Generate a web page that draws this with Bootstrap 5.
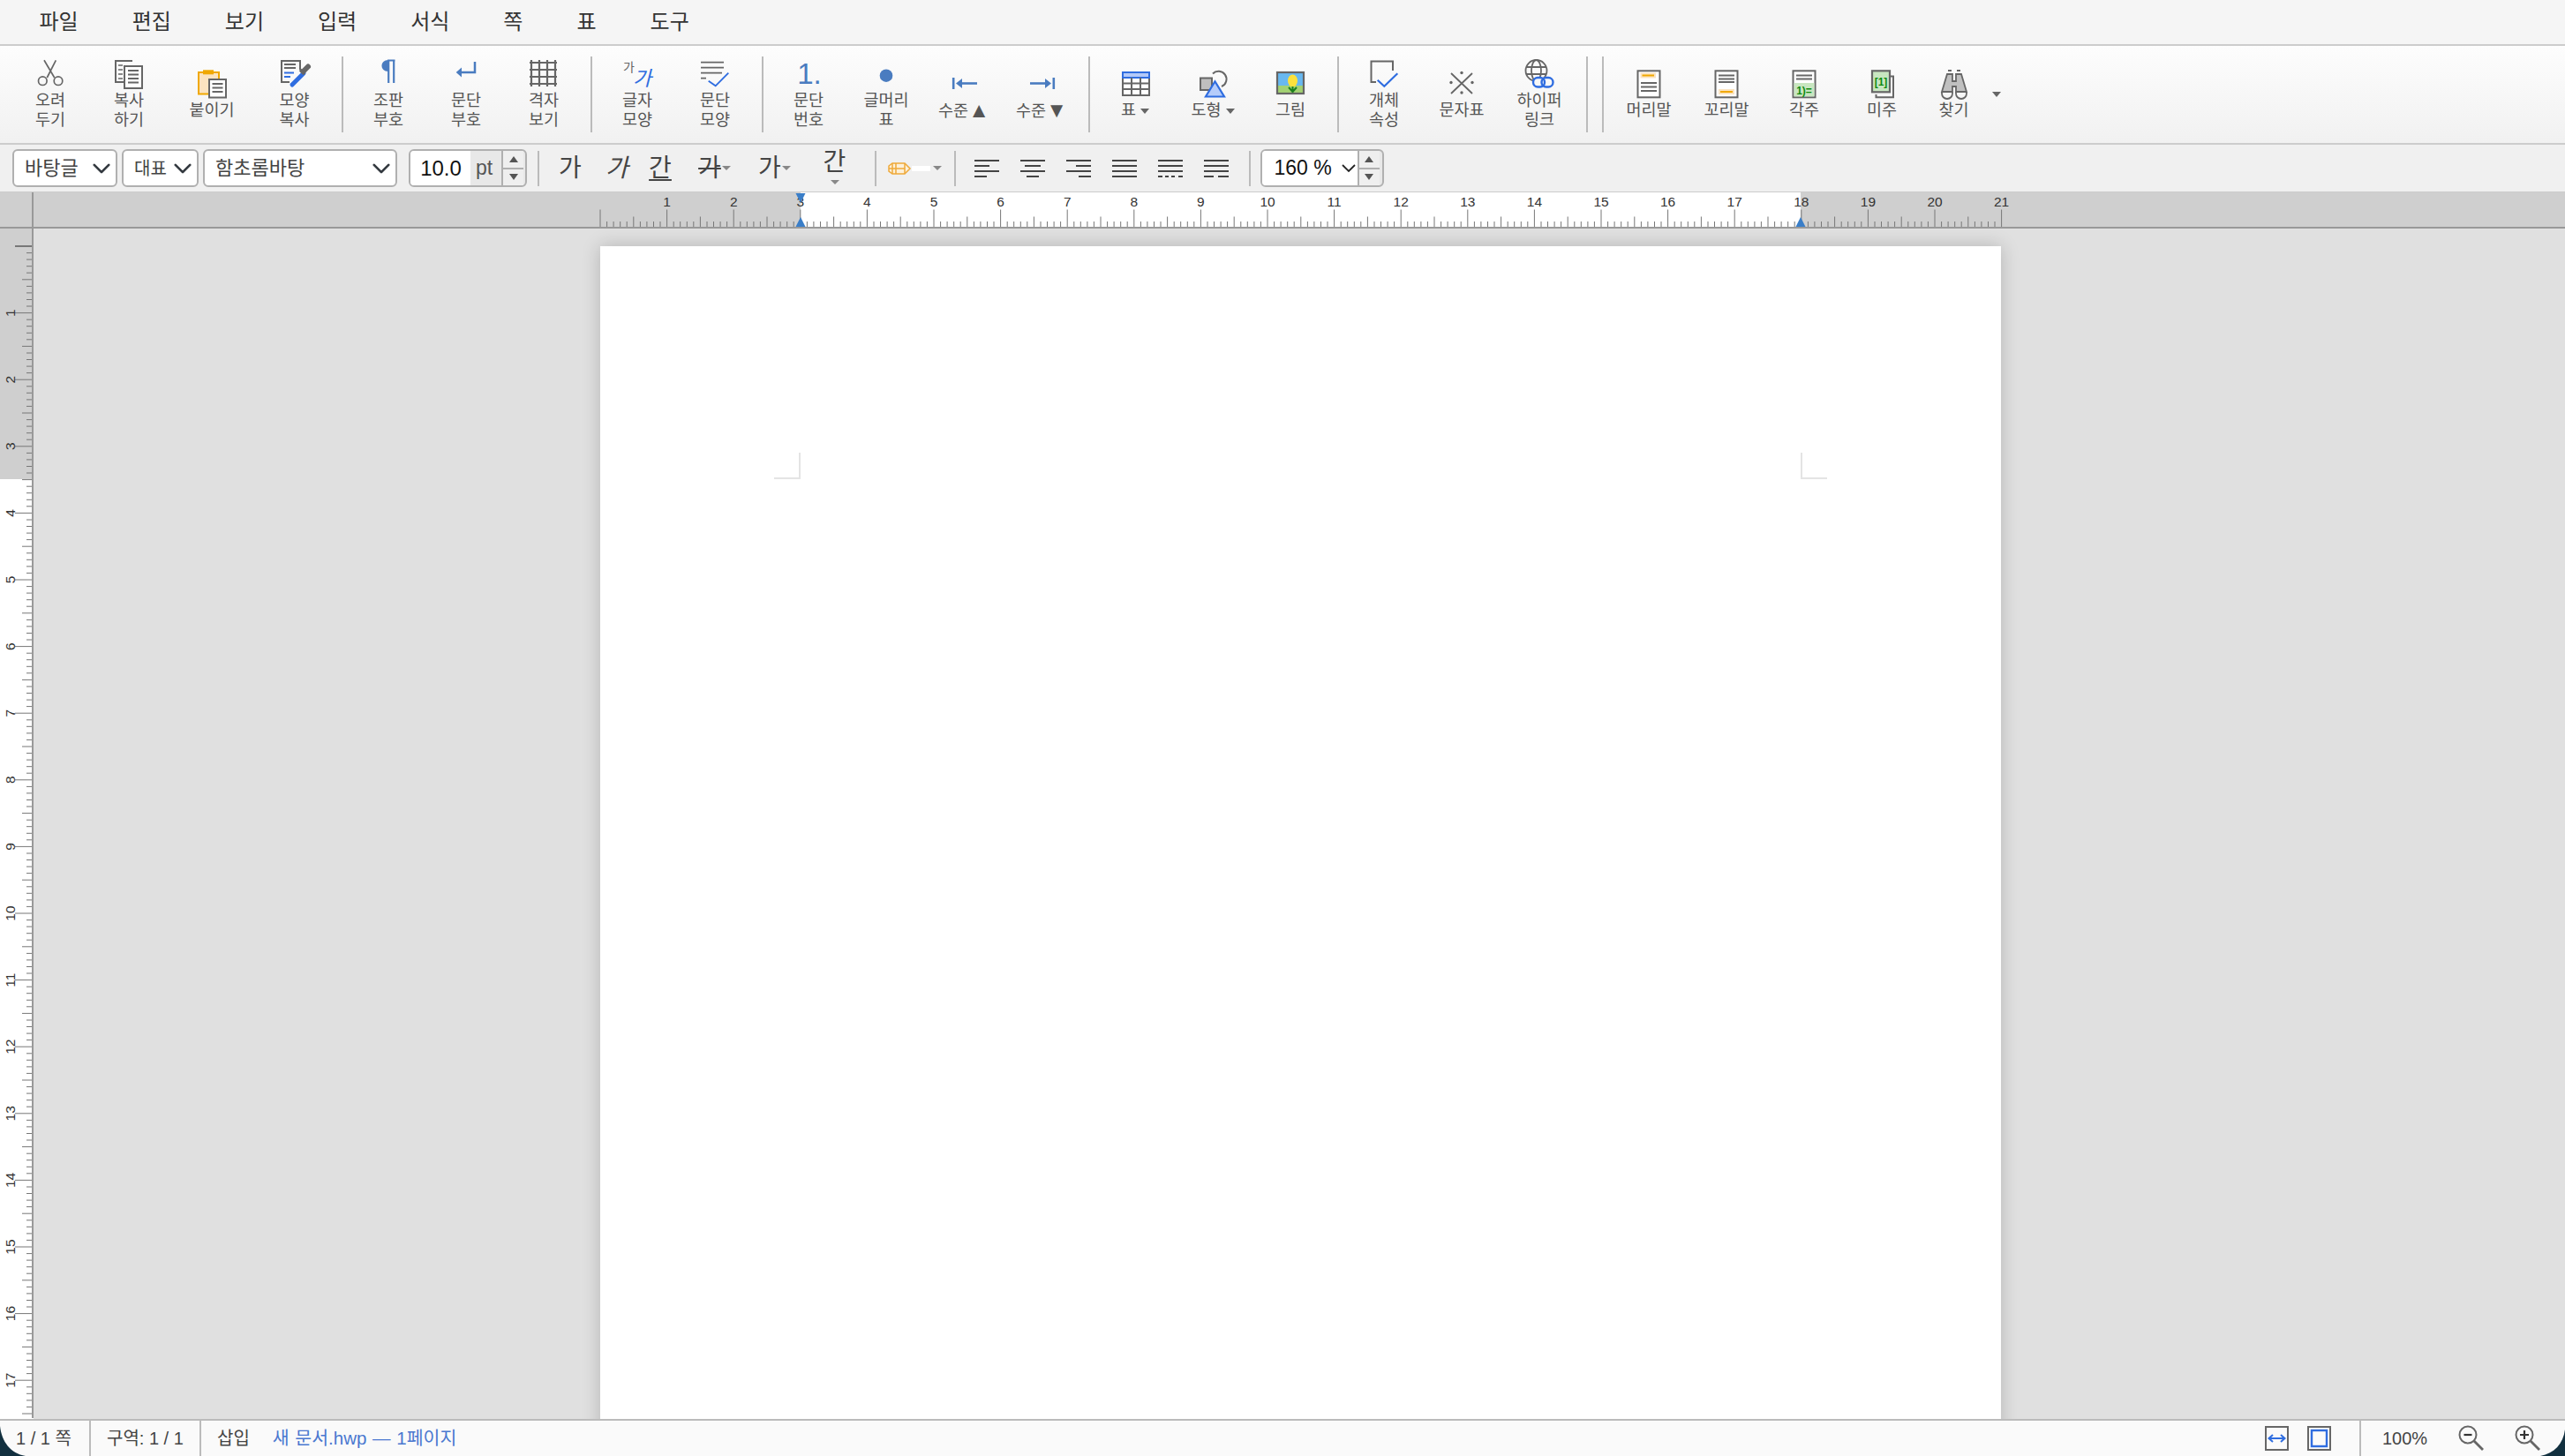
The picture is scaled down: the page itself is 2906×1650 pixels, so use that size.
<!DOCTYPE html>
<html lang="ko">
<head>
<meta charset="utf-8">
<title>새 문서.hwp</title>
<link href="https://cdn.jsdelivr.net/npm/bootstrap@5.3.0/dist/css/bootstrap.min.css" rel="stylesheet">
<style>
html,body{height:100%;margin:0}
body{font-family:"Liberation Sans","Noto Sans CJK KR",sans-serif;color:#444;background:#e0e0e0;overflow:hidden}
svg{overflow:visible;display:block}
.hw-menu{height:52px;background:#f5f5f5;border-bottom:2px solid #ccc;padding-left:14px;flex-shrink:0}
.hw-menu .nav-link{color:#333;font-size:24px;line-height:50px;padding:0 30.5px}
.hw-tools{height:112px;background:linear-gradient(#fdfdfd,#f1f1f1);border-bottom:2px solid #ccc;padding-left:13px;flex-shrink:0}
.hw-item{width:88px;height:110px;padding:0;border:0;border-radius:0;color:#555;font-size:18.5px;line-height:22px;flex-shrink:0}
.hw-item svg{margin-bottom:4px}
.hw-item2{width:90px}
.hw-item3{width:98px}
.hw-item4{width:89px}
.hw-bigtri{font-size:24px;line-height:22px;vertical-align:-1px}
.hw-vsep{width:2px;height:86px;background:#bbb;margin:12px 7px 0 9px;flex-shrink:0}
.hw-find{width:75px}
.hw-more{width:22px;height:110px;flex-shrink:0}
.hw-tri{display:inline-block;width:0;height:0;border-left:5px solid transparent;border-right:5px solid transparent;border-top:6px solid #666;vertical-align:middle}
.hw-tri-s{border-left-width:5px;border-right-width:5px;border-top:5px solid #888}
.hw-up{border-top:0;border-bottom:7px solid #555;border-left-width:5px;border-right-width:5px}
.hw-dn{border-top:7px solid #555;border-left-width:5px;border-right-width:5px}
.hw-format{height:54px;background:#f0f0f0;border-bottom:1px solid #ccc;padding-left:14px;flex-shrink:0}
.hw-select{height:43px;border:2px solid #b0b0b0;border-radius:6px;font-size:22px;color:#444;padding:0 24px 0 12px;background-position:right 5px center;background-size:22px 22px;background-color:#fff;flex-shrink:0;line-height:38px}
.hw-style{width:119px;margin-right:5px}
.hw-lang{width:87px;margin-right:5px;font-size:20px;padding-left:12px}
.hw-font{width:220px;margin-right:13px}
.hw-group{height:43px;border:2px solid #b0b0b0;border-radius:6px;overflow:hidden;flex-wrap:nowrap;flex-shrink:0;background:#e8e8e8}
.hw-size{width:134px}
.hw-zoom{width:140px;margin-left:11px}
.hw-group .hw-val{background:#fff;color:#111;font-size:24px;line-height:39px;padding:0;border:0;border-radius:0;width:69px;text-align:center;white-space:nowrap;flex-shrink:0}
.hw-zoom .hw-val{width:109px;padding-left:14px;font-size:23px;gap:11px}
.hw-unit{width:36px;padding:0 0 0 6px;background:#e8e8e8;border:0;border-radius:0;color:#555;font-size:23px;line-height:39px}
.hw-spin{width:25px;border-left:2px solid #b0b0b0;background:#efefef;flex-shrink:0}
.hw-spin>div{flex:1 1 0;display:flex;align-items:center;justify-content:center}
.hw-spin>div:first-child{border-bottom:2px solid #b0b0b0}
.hw-fsep{width:2px;height:40px;background:#bbb;flex-shrink:0}
.hw-fmargin{margin-left:12px}
.hw-fb{height:53px;padding:0;border:0;border-radius:0;color:#444;font-size:28px;line-height:34px;flex-shrink:0;display:flex;align-items:center}
.hw-w70{width:70px;justify-content:center}
.hw-w40{width:36px;justify-content:center}
.hw-w58{width:62px;justify-content:center}
.hw-w61{width:61px;padding-left:11px}
.hw-w65{width:65px;padding-left:18px}
.hw-w81{width:81px;flex-direction:column;justify-content:flex-start;padding-top:3px;line-height:34px}
.hw-w81 .hw-tri{margin-top:3px}
.hw-i{font-style:italic}
.hw-u{text-decoration:underline;text-underline-offset:3px}
.hw-s{text-decoration:line-through}
.hw-f{font-size:28px;width:28px;text-align:center;white-space:nowrap}
.hw-sep5{margin-left:5px}
.hw-color{width:88px;padding-left:13px;flex-shrink:0}
.hw-swatch{width:21px;height:6px;background:#fff;margin:0 3px 0 1px}
.hw-align{width:52px;height:53px;padding:0;border:0;border-radius:0;flex-shrink:0;display:flex;align-items:center;justify-content:center}
.hw-aligns{margin-left:8.5px;margin-right:11px}
.hw-ruler-h{height:41px;background:#cfcfcf;flex-shrink:0}
.hw-mid{min-height:0}
.hw-ruler-v{width:38px;flex-shrink:0;background:#fff}
.hw-canvas{background:#e0e0e0;padding:20px 0 0 642px;overflow:hidden;min-width:0}
.hw-page{width:1587px;height:2245px;background:#fff;box-shadow:0 0 20px rgba(0,0,0,.2);position:relative;flex-shrink:0}
.hw-crop{position:absolute;width:30px;height:30px;top:234px;border-bottom:2px solid #e4e4e4}
.hw-crop-l{left:197px;border-right:2px solid #e4e4e4}
.hw-crop-r{left:1360px;border-left:2px solid #e4e4e4}
.hw-status{height:42px;background:#fafafa;border-top:2px solid #bbb;flex-shrink:0;position:relative;font-size:20px;color:#444;white-space:nowrap}
.hw-c1{width:103px;padding-left:18px;border-right:2px solid #bbb;height:100%}
.hw-c2{width:125px;padding-left:18px;border-right:2px solid #bbb;height:100%}
.hw-c3{padding-left:18px}
.hw-doc{color:#4a78d0;margin-left:26px;font-size:20.5px;word-spacing:1px}
.hw-c4{width:233px;padding-left:24px;border-left:2px solid #bbb;height:100%;margin-left:32px}
.hw-ic1{margin-left:21px}
.hw-pct{width:54px;margin-right:35px}
.hw-mag{margin-right:34px}
.hw-corner{position:absolute;bottom:0}
.hw-corner-l{left:0}
.hw-corner-r{right:0}
text{font-family:"Liberation Sans","Noto Sans CJK KR",sans-serif}
</style>
</head>
<body class="d-flex flex-column">

<nav class="nav hw-menu flex-nowrap">
  <a class="nav-link" href="#">파일</a><a class="nav-link" href="#">편집</a><a class="nav-link" href="#">보기</a><a class="nav-link" href="#">입력</a><a class="nav-link" href="#">서식</a><a class="nav-link" href="#">쪽</a><a class="nav-link" href="#">표</a><a class="nav-link" href="#">도구</a>
</nav>

<div class="hw-tools d-flex align-items-start">
  <button class="btn hw-item d-flex flex-column align-items-center justify-content-center"><svg width="36" height="32" viewBox="0 0 36 32" fill="none" stroke="#666" stroke-width="1.7"><circle cx="9.3" cy="24.7" r="4.8"/><circle cx="27" cy="24.7" r="4.8"/><path d="M11 1.3 22.7 21M24.3 1.3 14.3 21"/></svg><span>오려<br>두기</span></button>
  <button class="btn hw-item hw-item2 d-flex flex-column align-items-center justify-content-center"><svg width="36" height="32" viewBox="0 0 36 32" fill="none" stroke="#666" stroke-width="2"><path d="M22 2H3V26H12"/><path d="M6 7H11M6 12H11M6 17H11M6 22H11" stroke-width="1.5"/><rect x="13" y="8" width="20" height="25" fill="#fff"/><path d="M17 13H29M17 17.500H29M17 22H29M17 26.500H29" stroke-width="1.800"/></svg><span>복사<br>하기</span></button>
  <button class="btn hw-item hw-item3 d-flex flex-column align-items-center justify-content-center"><svg width="36" height="32" viewBox="0 0 36 32" fill="none"><rect x="3" y="4" width="23" height="24.500" fill="#fbe3c0" stroke="#f0a800" stroke-width="2"/><rect x="8" y="1.300" width="12" height="5" fill="#f0a800"/><rect x="15" y="12" width="19" height="20.500" fill="#fff" stroke="#666" stroke-width="2"/><path d="M18.500 17H30.500M18.500 21.500H30.500M18.500 26H30.500" stroke="#666" stroke-width="1.800"/></svg><span>붙이기</span></button>
  <button class="btn hw-item hw-item4 d-flex flex-column align-items-center justify-content-center"><svg width="36" height="32" viewBox="0 0 36 32" fill="none"><path d="M24 12V2H3V26H12" stroke="#666" stroke-width="2"/><path d="M6 6H19M6 10H19" stroke="#666" stroke-width="1.800"/><path d="M6 15.500H17M6 20H13" stroke="#2f6de0" stroke-width="1.800"/><path d="M28 16 15 29" stroke="#2f6de0" stroke-width="5" stroke-linecap="round"/><path d="M24 12 29 17" stroke="#666" stroke-width="3.500"/><path d="M27.500 14 33 8.500" stroke="#666" stroke-width="6" stroke-linecap="round"/></svg><span>모양<br>복사</span></button>
  <div class="hw-vsep"></div>
  <button class="btn hw-item d-flex flex-column align-items-center justify-content-center"><svg width="36" height="32" viewBox="0 0 36 32" fill="none"><path d="M18 1C13 1 10.500 4 10.500 7.500S13 14 18 14Z" fill="#4a7cc0"/><path d="M18.200 1V27M24.200 1V27M17 1.500H25.500" stroke="#4a7cc0" stroke-width="2.200"/></svg><span>조판<br>부호</span></button>
  <button class="btn hw-item d-flex flex-column align-items-center justify-content-center"><svg width="36" height="32" viewBox="0 0 36 32" fill="none"><path d="M28 3V15H12" stroke="#4a7cc0" stroke-width="2.500"/><path d="M6.700 15 13 9.500V20.500Z" fill="#4a7cc0"/></svg><span>문단<br>부호</span></button>
  <button class="btn hw-item d-flex flex-column align-items-center justify-content-center"><svg width="36" height="32" viewBox="0 0 36 32" fill="none" stroke="#666" stroke-width="2.200"><path d="M4 1V31M13 1V31M22 1V31M31 1V31M2 4H33M2 12H33M2 20H33M2 28H33"/></svg><span>격자<br>보기</span></button>
  <div class="hw-vsep"></div>
  <button class="btn hw-item d-flex flex-column align-items-center justify-content-center"><svg width="36" height="32" viewBox="0 0 36 32"><text x="2" y="14" font-size="14" fill="#666">가</text><text x="13" y="30" font-size="23" font-style="italic" fill="#2f6de0">가</text></svg><span>글자<br>모양</span></button>
  <button class="btn hw-item d-flex flex-column align-items-center justify-content-center"><svg width="36" height="32" viewBox="0 0 36 32" fill="none"><path d="M2 3.700H28M2 9.700H28M2 15.700H26M2 21.700H8" stroke="#666" stroke-width="1.800"/><path d="M10.700 24.700 18.700 30.300 33.300 15.700" stroke="#2f6de0" stroke-width="1.900"/></svg><span>문단<br>모양</span></button>
  <div class="hw-vsep"></div>
  <button class="btn hw-item d-flex flex-column align-items-center justify-content-center"><svg width="36" height="32" viewBox="0 0 36 32"><text x="19" y="28" font-size="33" text-anchor="middle" fill="#4a7cc0">1.</text></svg><span>문단<br>번호</span></button>
  <button class="btn hw-item d-flex flex-column align-items-center justify-content-center"><svg width="36" height="32" viewBox="0 0 36 32"><circle cx="18" cy="18.700" r="7.300" fill="#4a7cc0"/></svg><span>글머리<br>표</span></button>
  <button class="btn hw-item d-flex flex-column align-items-center justify-content-center"><svg width="36" height="32" viewBox="0 0 36 32" fill="none"><path d="M6.200 10V23" stroke="#4a7cc0" stroke-width="2.600"/><path d="M14 16.500H33" stroke="#4a7cc0" stroke-width="2.600"/><path d="M9 16.500 16 11V22Z" fill="#4a7cc0"/></svg><span>수준<span class="hw-bigtri">▲</span></span></button>
  <button class="btn hw-item d-flex flex-column align-items-center justify-content-center"><svg width="36" height="32" viewBox="0 0 36 32" fill="none"><path d="M31.800 10V23" stroke="#4a7cc0" stroke-width="2.600"/><path d="M5 16.500H24" stroke="#4a7cc0" stroke-width="2.600"/><path d="M29 16.500 22 11V22Z" fill="#4a7cc0"/></svg><span>수준<span class="hw-bigtri">▼</span></span></button>
  <div class="hw-vsep"></div>
  <button class="btn hw-item d-flex flex-column align-items-center justify-content-center"><svg width="36" height="32" viewBox="0 0 36 32" fill="none"><rect x="4" y="4" width="30" height="26" fill="#fff" stroke="#666" stroke-width="2"/><rect x="4" y="4" width="30" height="6" fill="#b3c9f8" stroke="#2f6de0" stroke-width="2"/><path d="M4 16.500H34M4 23H34M14 10V30M24 10V30" stroke="#666" stroke-width="2"/></svg><span>표 <i class="hw-tri"></i></span></button>
  <button class="btn hw-item d-flex flex-column align-items-center justify-content-center"><svg width="36" height="32" viewBox="0 0 36 32" fill="none"><rect x="4" y="10.500" width="13" height="13.500" fill="#bfbfbf" stroke="#666" stroke-width="2"/><path d="M18 5.500A9 9 0 1 1 28 20" stroke="#666" stroke-width="2"/><path d="M10 31.500H31L20.500 14.300Z" fill="#b5ccfa" stroke="#2f6de0" stroke-width="2.200"/></svg><span>도형 <i class="hw-tri"></i></span></button>
  <button class="btn hw-item d-flex flex-column align-items-center justify-content-center"><svg width="36" height="32" viewBox="0 0 36 32" fill="none"><rect x="3" y="4" width="30" height="24" fill="#68b8f0"/><rect x="3" y="19" width="30" height="9" fill="#a3d273"/><rect x="3" y="4" width="30" height="24" stroke="#666" stroke-width="2.200"/><ellipse cx="20.500" cy="13.500" rx="5.500" ry="7" fill="#fde13c"/><path d="M20.500 20V27M20.500 26 16 21M20.500 26 25 21" stroke="#1d7f1d" stroke-width="2"/></svg><span>그림</span></button>
  <div class="hw-vsep"></div>
  <button class="btn hw-item d-flex flex-column align-items-center justify-content-center"><svg width="36" height="32" viewBox="0 0 36 32" fill="none"><path d="M9 26H3.500V2.500H28V13" stroke="#666" stroke-width="2"/><path d="M10.700 23.700 18.300 30.700 33.300 16.300" stroke="#2f6de0" stroke-width="2.200"/></svg><span>개체<br>속성</span></button>
  <button class="btn hw-item d-flex flex-column align-items-center justify-content-center"><svg width="36" height="32" viewBox="0 0 36 32" fill="#666"><path d="M6 5 30 28M30 5 6 28" stroke="#666" stroke-width="1.800" fill="none"/><circle cx="18" cy="4.500" r="1.700"/><circle cx="18" cy="27" r="1.700"/><circle cx="6" cy="15.500" r="1.700"/><circle cx="30" cy="15.500" r="1.700"/></svg><span>문자표</span></button>
  <button class="btn hw-item d-flex flex-column align-items-center justify-content-center"><svg width="36" height="32" viewBox="0 0 36 32" fill="none"><g stroke="#666" stroke-width="1.800"><circle cx="14.500" cy="13" r="12"/><ellipse cx="14.500" cy="13" rx="5.500" ry="12"/><path d="M3 9H26M3 17H26"/></g><rect x="11" y="21" width="13" height="10.500" rx="5.200" fill="#f7f7f7" stroke="#2f6de0" stroke-width="2.400"/><rect x="20.500" y="21" width="13" height="10.500" rx="5.200" stroke="#2f6de0" stroke-width="2.400"/></svg><span>하이퍼<br>링크</span></button>
  <div class="hw-vsep"></div>
  <div class="hw-vsep"></div>
  <button class="btn hw-item d-flex flex-column align-items-center justify-content-center"><svg width="36" height="32" viewBox="0 0 36 32" fill="none"><rect x="5.500" y="2.300" width="25" height="30" fill="#fff" stroke="#666" stroke-width="2"/><rect x="8.500" y="4.500" width="17.500" height="6" fill="#fbe3c0"/><path d="M10.500 7.500H24" stroke="#f0a800" stroke-width="2"/><path d="M9 16H27M9 20.500H27M9 25H27" stroke="#666" stroke-width="1.800"/></svg><span>머리말</span></button>
  <button class="btn hw-item d-flex flex-column align-items-center justify-content-center"><svg width="36" height="32" viewBox="0 0 36 32" fill="none"><rect x="5.500" y="2.300" width="25" height="30" fill="#fff" stroke="#666" stroke-width="2"/><path d="M9 7.500H27M9 11.500H27M9 15H27" stroke="#666" stroke-width="1.800"/><rect x="9" y="23" width="18" height="6" fill="#fbe3c0"/><path d="M11 26H25" stroke="#f0a800" stroke-width="2"/></svg><span>꼬리말</span></button>
  <button class="btn hw-item d-flex flex-column align-items-center justify-content-center"><svg width="36" height="32" viewBox="0 0 36 32" fill="none"><rect x="5.500" y="2.300" width="25" height="30" fill="#fff" stroke="#666" stroke-width="2"/><rect x="6.500" y="16" width="23" height="15.300" fill="#c8e6c0"/><path d="M9 7.500H27M9 11.500H27" stroke="#666" stroke-width="1.800"/><text x="18" y="29" font-size="12" font-weight="700" text-anchor="middle" fill="#0f8a0f">1)=</text></svg><span>각주</span></button>
  <button class="btn hw-item d-flex flex-column align-items-center justify-content-center"><svg width="36" height="32" viewBox="0 0 36 32" fill="none"><path d="M28 8.500H31V32.300H11.500V29" stroke="#666" stroke-width="2"/><rect x="7" y="2.300" width="20" height="24" fill="#c8e6c0" stroke="#666" stroke-width="2.200"/><text x="17" y="19" font-size="12" font-weight="700" text-anchor="middle" fill="#0f8a0f">[1]</text></svg><span>미주</span></button>
  <button class="btn hw-item hw-find d-flex flex-column align-items-center justify-content-center"><svg width="36" height="32" viewBox="0 0 36 32" fill="none" stroke="#666" stroke-width="1.800"><path d="M11 2H15M21 2H25" stroke-width="2"/><path d="M10 6H16V14H20V6H26L32 26H20V20H16V26H4Z" fill="#c0c0c0"/><path d="M4 26V28A4 4 0 0 0 16 28V26M20 26V28A4 4 0 0 0 32 28V26"/></svg><span>찾기</span></button>
  <div class="hw-more d-flex justify-content-center align-items-center"><i class="hw-tri"></i></div>
</div>

<div class="hw-format d-flex align-items-center">
  <select class="form-select hw-select hw-style" aria-label="스타일"><option>바탕글</option></select>
  <select class="form-select hw-select hw-lang" aria-label="언어"><option>대표</option></select>
  <select class="form-select hw-select hw-font" aria-label="글꼴"><option>함초롬바탕</option></select>
  <div class="input-group hw-group hw-size">
    <span class="hw-val">10.0</span><span class="input-group-text hw-unit">pt</span>
    <div class="hw-spin d-flex flex-column"><div><i class="hw-tri hw-up"></i></div><div><i class="hw-tri hw-dn"></i></div></div>
  </div>
  <div class="hw-fsep hw-fmargin"></div>
  <button class="btn hw-fb hw-w70">가</button>
  <button class="btn hw-fb hw-w40 hw-i">가</button>
  <button class="btn hw-fb hw-w58"><span class="hw-u">간</span></button>
  <button class="btn hw-fb hw-w61"><span class="hw-f hw-s">가</span><i class="hw-tri hw-tri-s"></i></button>
  <button class="btn hw-fb hw-w65"><span class="hw-f">가</span><i class="hw-tri hw-tri-s"></i></button>
  <button class="btn hw-fb hw-w81 align-items-center"><span>간</span><i class="hw-tri hw-tri-s"></i></button>
  <div class="hw-fsep hw-sep5"></div>
  <div class="hw-color d-flex align-items-center">
    <svg width="26" height="14" viewBox="0 0 26 14" fill="none" stroke="#eea93a" stroke-width="1.500"><path d="M1 4 5 1H19L25 7 19 13H5L1 10Z" fill="#fdf0d8"/><path d="M5 1V13M9 1V13M1 7H19M19 1V13"/></svg>
    <span class="hw-swatch"></span><i class="hw-tri hw-tri-s"></i>
  </div>
  <div class="hw-fsep"></div>
  <div class="hw-aligns d-flex">
    <button class="btn hw-align"><svg width="28" height="20" viewBox="0 0 28 20" stroke="#444" stroke-width="2"><path d="M0 1H28M0 7H17M0 13H28M0 19H14"/></svg></button>
    <button class="btn hw-align"><svg width="28" height="20" viewBox="0 0 28 20" stroke="#444" stroke-width="2"><path d="M0 1H28M5 7H23M0 13H28M7 19H21"/></svg></button>
    <button class="btn hw-align"><svg width="28" height="20" viewBox="0 0 28 20" stroke="#444" stroke-width="2"><path d="M0 1H28M11 7H28M0 13H28M14 19H28"/></svg></button>
    <button class="btn hw-align"><svg width="28" height="20" viewBox="0 0 28 20" stroke="#444" stroke-width="2"><path d="M0 1H28M0 7H28M0 13H28M0 19H28"/></svg></button>
    <button class="btn hw-align"><svg width="28" height="20" viewBox="0 0 28 20" stroke="#444" stroke-width="2"><path d="M0 1H28M0 7H28M0 13H28M0 19H5M8 19H12M15 19H19M23 19H28"/></svg></button>
    <button class="btn hw-align"><svg width="28" height="20" viewBox="0 0 28 20" stroke="#444" stroke-width="2"><path d="M0 1H28M0 7H28M0 13H28M0 19H11M16 19H28"/></svg></button>
  </div>
  <div class="hw-fsep"></div>
  <div class="input-group hw-group hw-zoom">
    <span class="hw-val d-flex align-items-center">160 %<svg width="16" height="10" viewBox="0 0 16 10" fill="none" stroke="#222" stroke-width="1.800"><path d="M1 1 8 8 15 1"/></svg></span>
    <div class="hw-spin d-flex flex-column"><div><i class="hw-tri hw-up"></i></div><div><i class="hw-tri hw-dn"></i></div></div>
  </div>
</div>

<div class="hw-ruler-h" id="rulerH"></div>

<div class="hw-mid d-flex flex-grow-1">
  <div class="hw-ruler-v" id="rulerV"></div>
  <main class="hw-canvas flex-grow-1 d-flex align-items-start">
    <div class="hw-page">
      <div class="hw-crop hw-crop-l"></div>
      <div class="hw-crop hw-crop-r"></div>
    </div>
  </main>
</div>

<footer class="hw-status d-flex align-items-center">
  <div class="hw-c1 d-flex align-items-center">1 / 1 쪽</div>
  <div class="hw-c2 d-flex align-items-center">구역: 1 / 1</div>
  <div class="hw-c3">삽입</div>
  <div class="hw-doc">새 문서.hwp — 1페이지</div>
  <svg class="ms-auto" width="27" height="28" viewBox="0 0 27 28" fill="none"><rect x="1" y="1" width="25" height="26" stroke="#666" stroke-width="2"/><path d="M5 14H22" stroke="#2f6de0" stroke-width="2"/><path d="M9 10 4.500 14 9 18M18 10 22.500 14 18 18" stroke="#2f6de0" stroke-width="2"/></svg>
  <svg class="hw-ic1" width="27" height="28" viewBox="0 0 27 28" fill="none"><rect x="1" y="1" width="25" height="26" stroke="#666" stroke-width="2"/><rect x="5" y="5" width="17" height="18" stroke="#2f6de0" stroke-width="2.400"/></svg>
  <div class="hw-c4 d-flex align-items-center">
    <span class="hw-pct">100%</span>
    <svg class="hw-mag" width="30" height="30" viewBox="0 0 30 30" fill="none" stroke="#666" stroke-width="2"><circle cx="11" cy="11" r="9.500"/><path d="M18 18 28 28" stroke-width="2.800"/><path d="M6.500 11H15.500" stroke="#333" stroke-width="2.200"/></svg>
    <svg class="hw-mag" width="30" height="30" viewBox="0 0 30 30" fill="none" stroke="#666" stroke-width="2"><circle cx="11" cy="11" r="9.500"/><path d="M18 18 28 28" stroke-width="2.800"/><path d="M6 11H16M11 6V16" stroke="#333" stroke-width="2.200"/></svg>
  </div>
  <svg class="hw-corner hw-corner-l" width="30" height="34" viewBox="0 0 30 34"><path d="M0 0C2 18 12 31 29 34H0Z" fill="#12303f"/></svg>
  <svg class="hw-corner hw-corner-r" width="30" height="30" viewBox="0 0 30 30"><path d="M30 0C28 16 18 27 2 30H30Z" fill="#12303f"/></svg>
</footer>

<script>
(function(){
  var cm=75.6, tick=cm/10, o='';
  o+='<svg width="2906" height="41" viewBox="0 0 2906 41"><rect x="907" y="0" width="1133" height="39" fill="#fff"/>';
  for(var i=0;i<=210;i++){
    var x=680+i*tick;
    var t=i%10==0?19.5:(i%5==0?27.5:33);
    o+='<path d="M'+x.toFixed(1)+' '+t+'V39" stroke="#777" stroke-width="1"/>';
  }
  for(var n=1;n<=21;n++){
    o+='<text x="'+(680+n*cm).toFixed(1)+'" y="16" font-size="15.5" text-anchor="middle" fill="#333">'+n+'</text>';
  }
  o+='<rect x="0" y="39" width="2906" height="2" fill="#999"/><rect x="36" y="0" width="2" height="41" fill="#999"/>';
  o+='<path d="M901.500 1H912.500L907 12Z" fill="#3a7ec8"/><path d="M901.500 39H912.500L907 28Z" fill="#3a7ec8"/><path d="M2034.500 39H2045.500L2040 28Z" fill="#3a7ec8"/></svg>';
  document.getElementById('rulerH').innerHTML=o;
  var y0=20, v='<svg width="38" height="1348" viewBox="0 0 38 1348"><rect width="36" height="284" fill="#cfcfcf"/><rect y="284" width="36" height="1064" fill="#fff"/>';
  for(var j=0;j<=176;j++){
    var y=y0+j*tick;
    var s=j%10==0?17:(j%5==0?25:30);
    v+='<path d="M'+s+' '+y.toFixed(1)+'H36" stroke="#777" stroke-width="'+(j==0?2:1)+'"/>';
  }
  for(var k=1;k<=17;k++){
    var yy=(y0+k*cm).toFixed(1);
    v+='<text transform="translate(17 '+yy+') rotate(-90)" font-size="15.5" text-anchor="middle" fill="#333">'+k+'</text>';
  }
  v+='<rect x="36" width="2" height="1348" fill="#999"/></svg>';
  document.getElementById('rulerV').innerHTML=v;
})();
</script>
</body>
</html>
